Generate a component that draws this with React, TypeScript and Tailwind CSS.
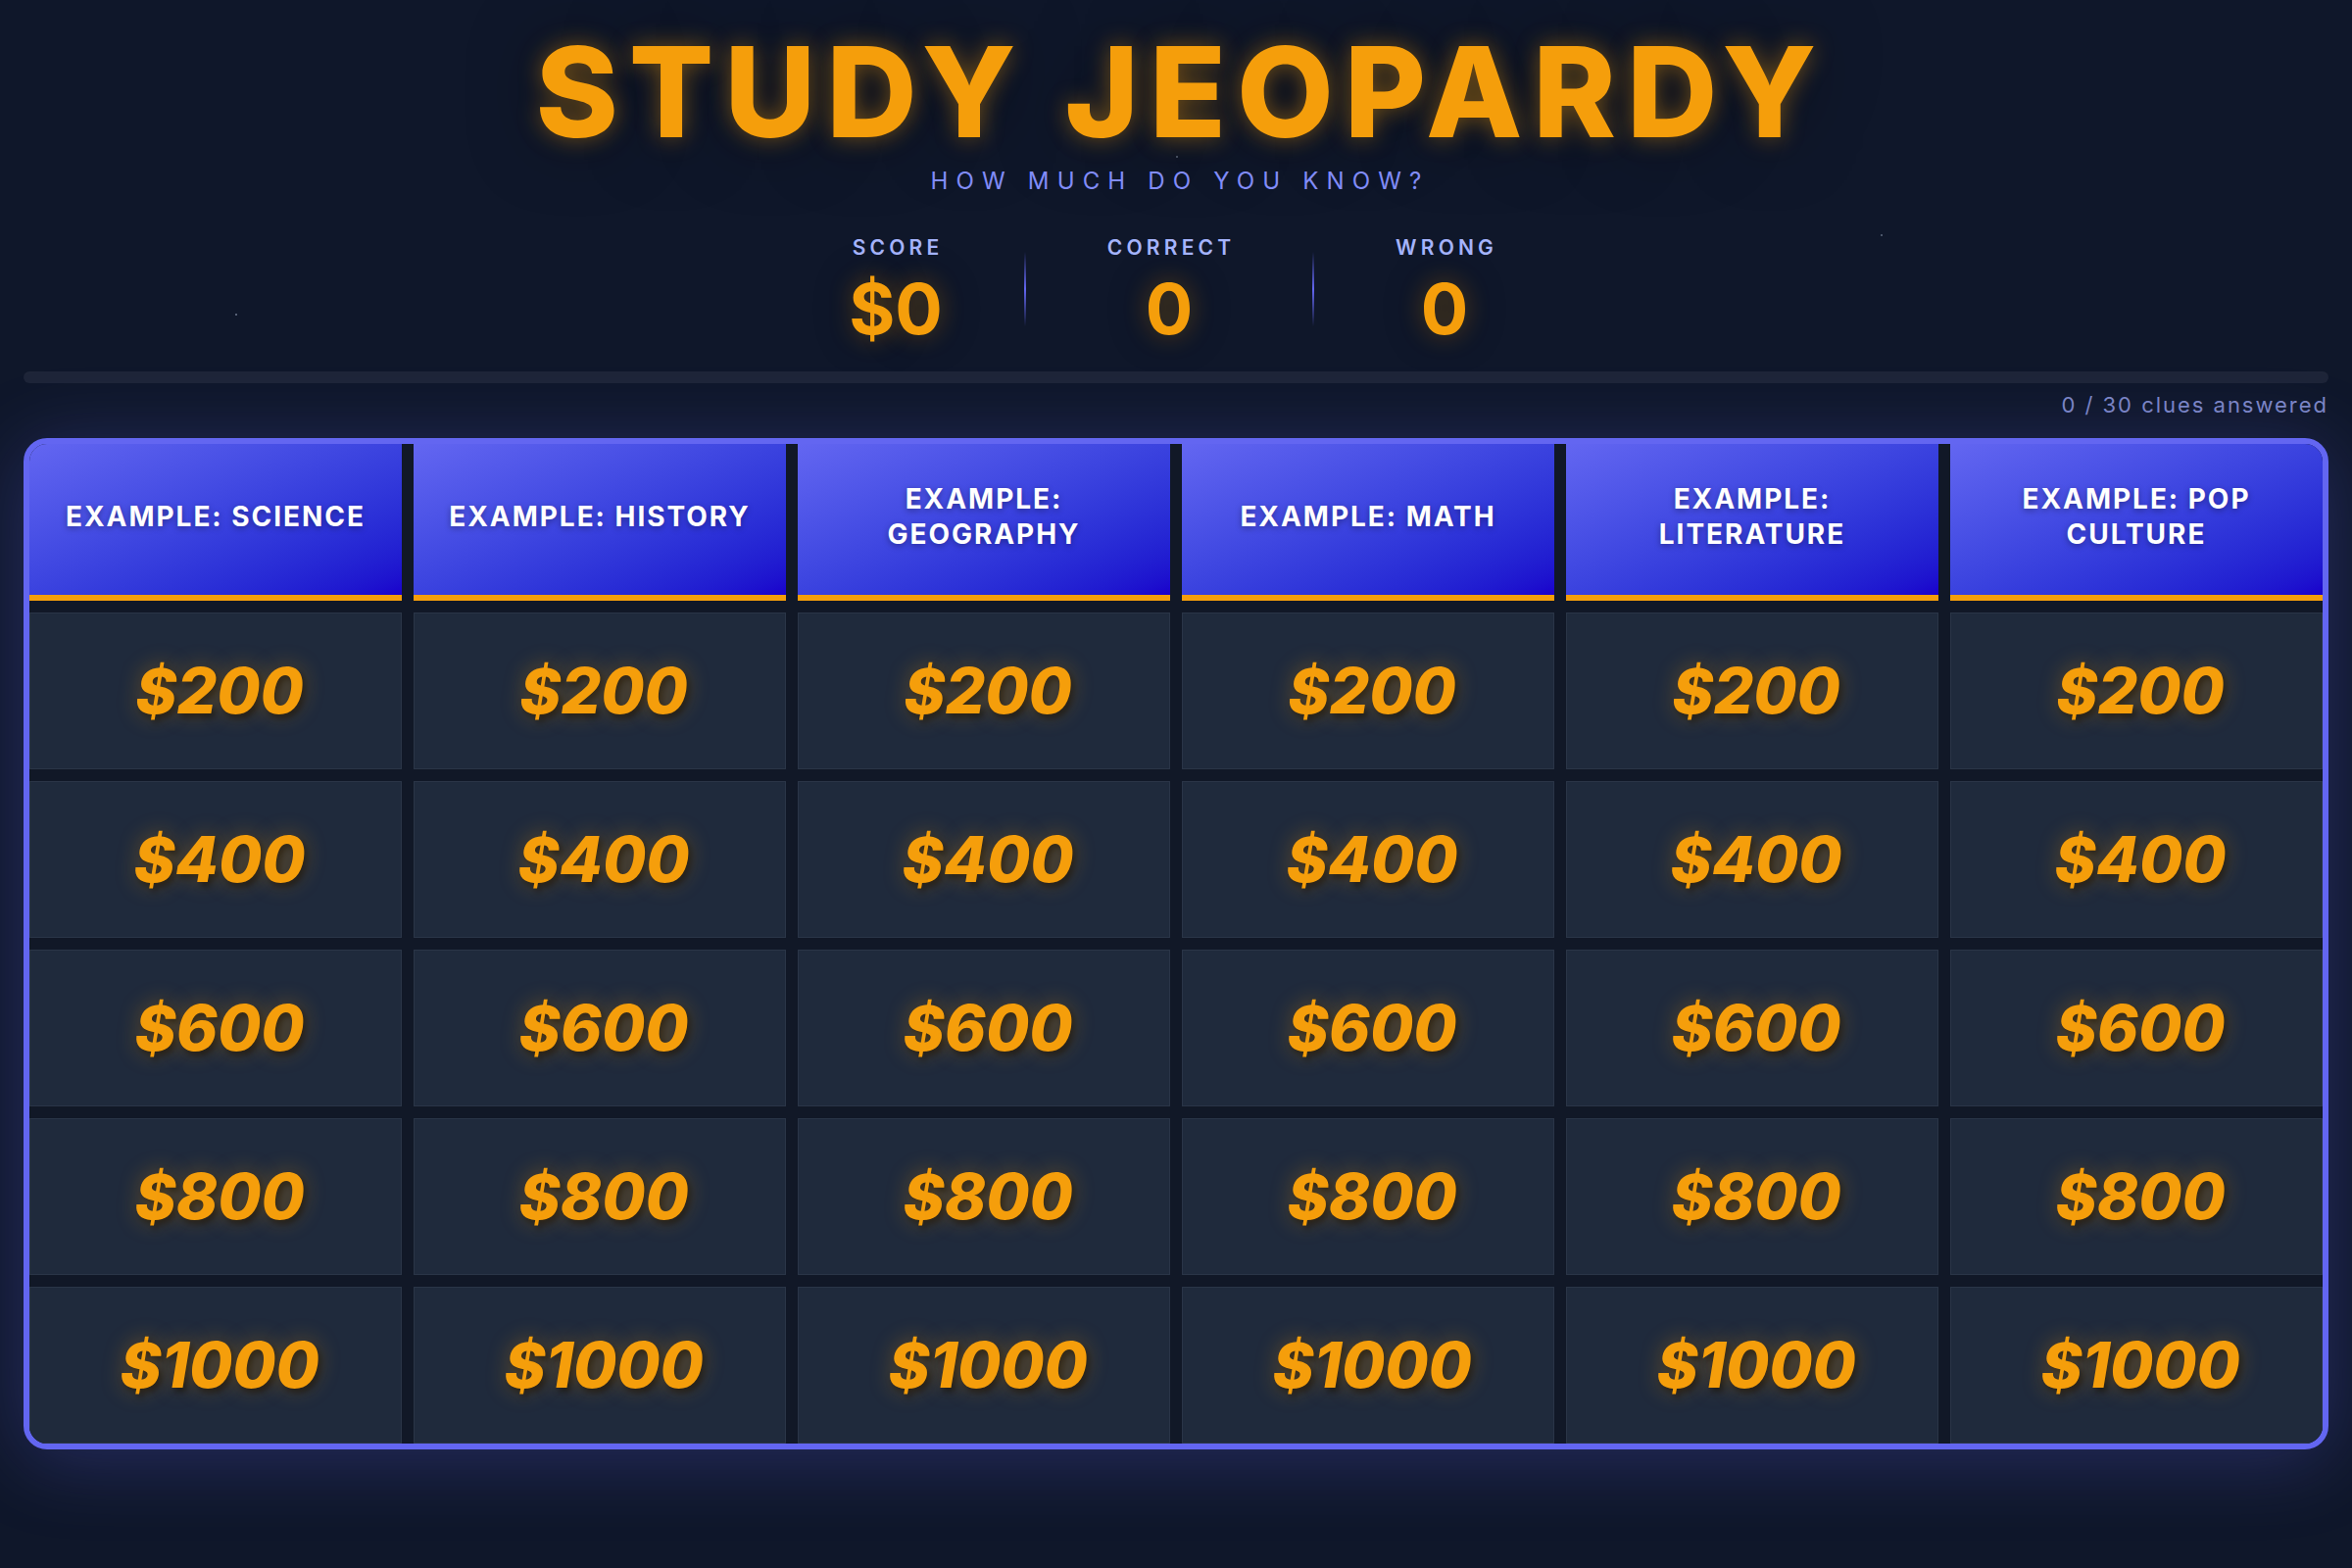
import React from "react";

const categories = [
  "Example: Science",
  "Example: History",
  "Example: Geography",
  "Example: Math",
  "Example: Literature",
  "Example: Pop Culture",
];

const values = [200, 400, 600, 800, 1000];

function Stat({ label, value }: { label: string; value: string }) {
  return (
    <div className="flex flex-col items-center">
      <div className="text-[21px] leading-[28px] font-semibold tracking-[0.2em] mr-[-0.2em] text-[#a5b4fc] uppercase">
        {label}
      </div>
      <div className="mt-[12px] text-[72px] leading-none font-bold text-[#f59e0b] [text-shadow:0_0_24px_rgba(245,158,11,0.35),0_0_40px_rgba(0,0,0,0.4)]">
        {value}
      </div>
    </div>
  );
}

function Divider() {
  return <div className="w-[2px] h-[76px] bg-linear-to-b from-transparent via-[#6366f1] to-transparent" />;
}

export default function App() {
  return (
    <div className="relative min-h-screen bg-[#0f172a] font-['Inter','Noto_Sans',sans-serif] px-6 pt-[30px] pb-[120px] overflow-hidden">
      {/* stars */}
      <div className="absolute left-[240px] top-[320px] w-[2px] h-[2px] rounded-full bg-[#94a3b8] opacity-70" />
      <div className="absolute left-[1919px] top-[239px] w-[2px] h-[2px] rounded-full bg-[#94a3b8] opacity-60" />
      <div className="absolute left-[1200px] top-[159px] w-[2px] h-[2px] rounded-full bg-[#94a3b8] opacity-60" />
      <div className="absolute left-[719px] top-[959px] w-[2px] h-[2px] rounded-full bg-[#94a3b8] opacity-60" />

      <div className="relative flex flex-col items-center">
        <h1 className="text-[128px] leading-none font-extrabold tracking-[0.085em] mr-[-0.085em] text-[#f59e0b] uppercase [text-shadow:0_0_24px_rgba(245,158,11,0.45),0_0_70px_rgba(0,0,0,0.55)]">
          Study Jeopardy
        </h1>
        <div className="mt-[9px] text-[24px] leading-[36px] font-normal tracking-[0.34em] mr-[-0.34em] text-[#818cf8] uppercase">
          How much do you know?
        </div>

        <div className="mt-[36px] mr-[10px] flex items-center justify-center gap-[83px]">
          <Stat label="Score" value="$0" />
          <Divider />
          <Stat label="Correct" value="0" />
          <Divider />
          <Stat label="Wrong" value="0" />
        </div>
      </div>

      <div className="relative mt-[28px] h-[12px] w-full rounded-full bg-[#1e2538]" />
      <div className="relative mt-[7px] text-right text-[22px] leading-[30px] tracking-[0.09em] text-[#7c86c4]">
        0 / 30 clues answered
      </div>

      <div className="relative mt-[19px] rounded-3xl border-[6px] border-[#6366f1] bg-[#111827] overflow-hidden shadow-[0_10px_80px_rgba(99,102,241,0.28)]">
        <div className="grid grid-cols-6 gap-3">
          {categories.map((c) => (
            <div
              key={c}
              className="h-[160px] flex items-center justify-center px-6 pb-[6px] text-center bg-linear-to-br from-[#6366f1] to-[#1a00cc] border-b-[6px] border-[#f59e0b]"
            >
              <span className="text-[28px] leading-[36px] font-bold tracking-[0.07em] text-white uppercase [text-shadow:0_2px_6px_rgba(0,0,0,0.35)]">
                {c}
              </span>
            </div>
          ))}
          {values.map((v) =>
            categories.map((c) => (
              <div
                key={c + v}
                className="h-[160px] flex items-center justify-center pl-[8px] bg-[#1f2a3c] border border-[#2a3547]"
              >
                <span className="text-[64px] leading-none font-extrabold italic text-[#f59e0b] [text-shadow:0_0_22px_rgba(245,158,11,0.35),3px_4px_6px_rgba(0,0,0,0.55)]">
                  ${v}
                </span>
              </div>
            ))
          )}
        </div>
      </div>
    </div>
  );
}
